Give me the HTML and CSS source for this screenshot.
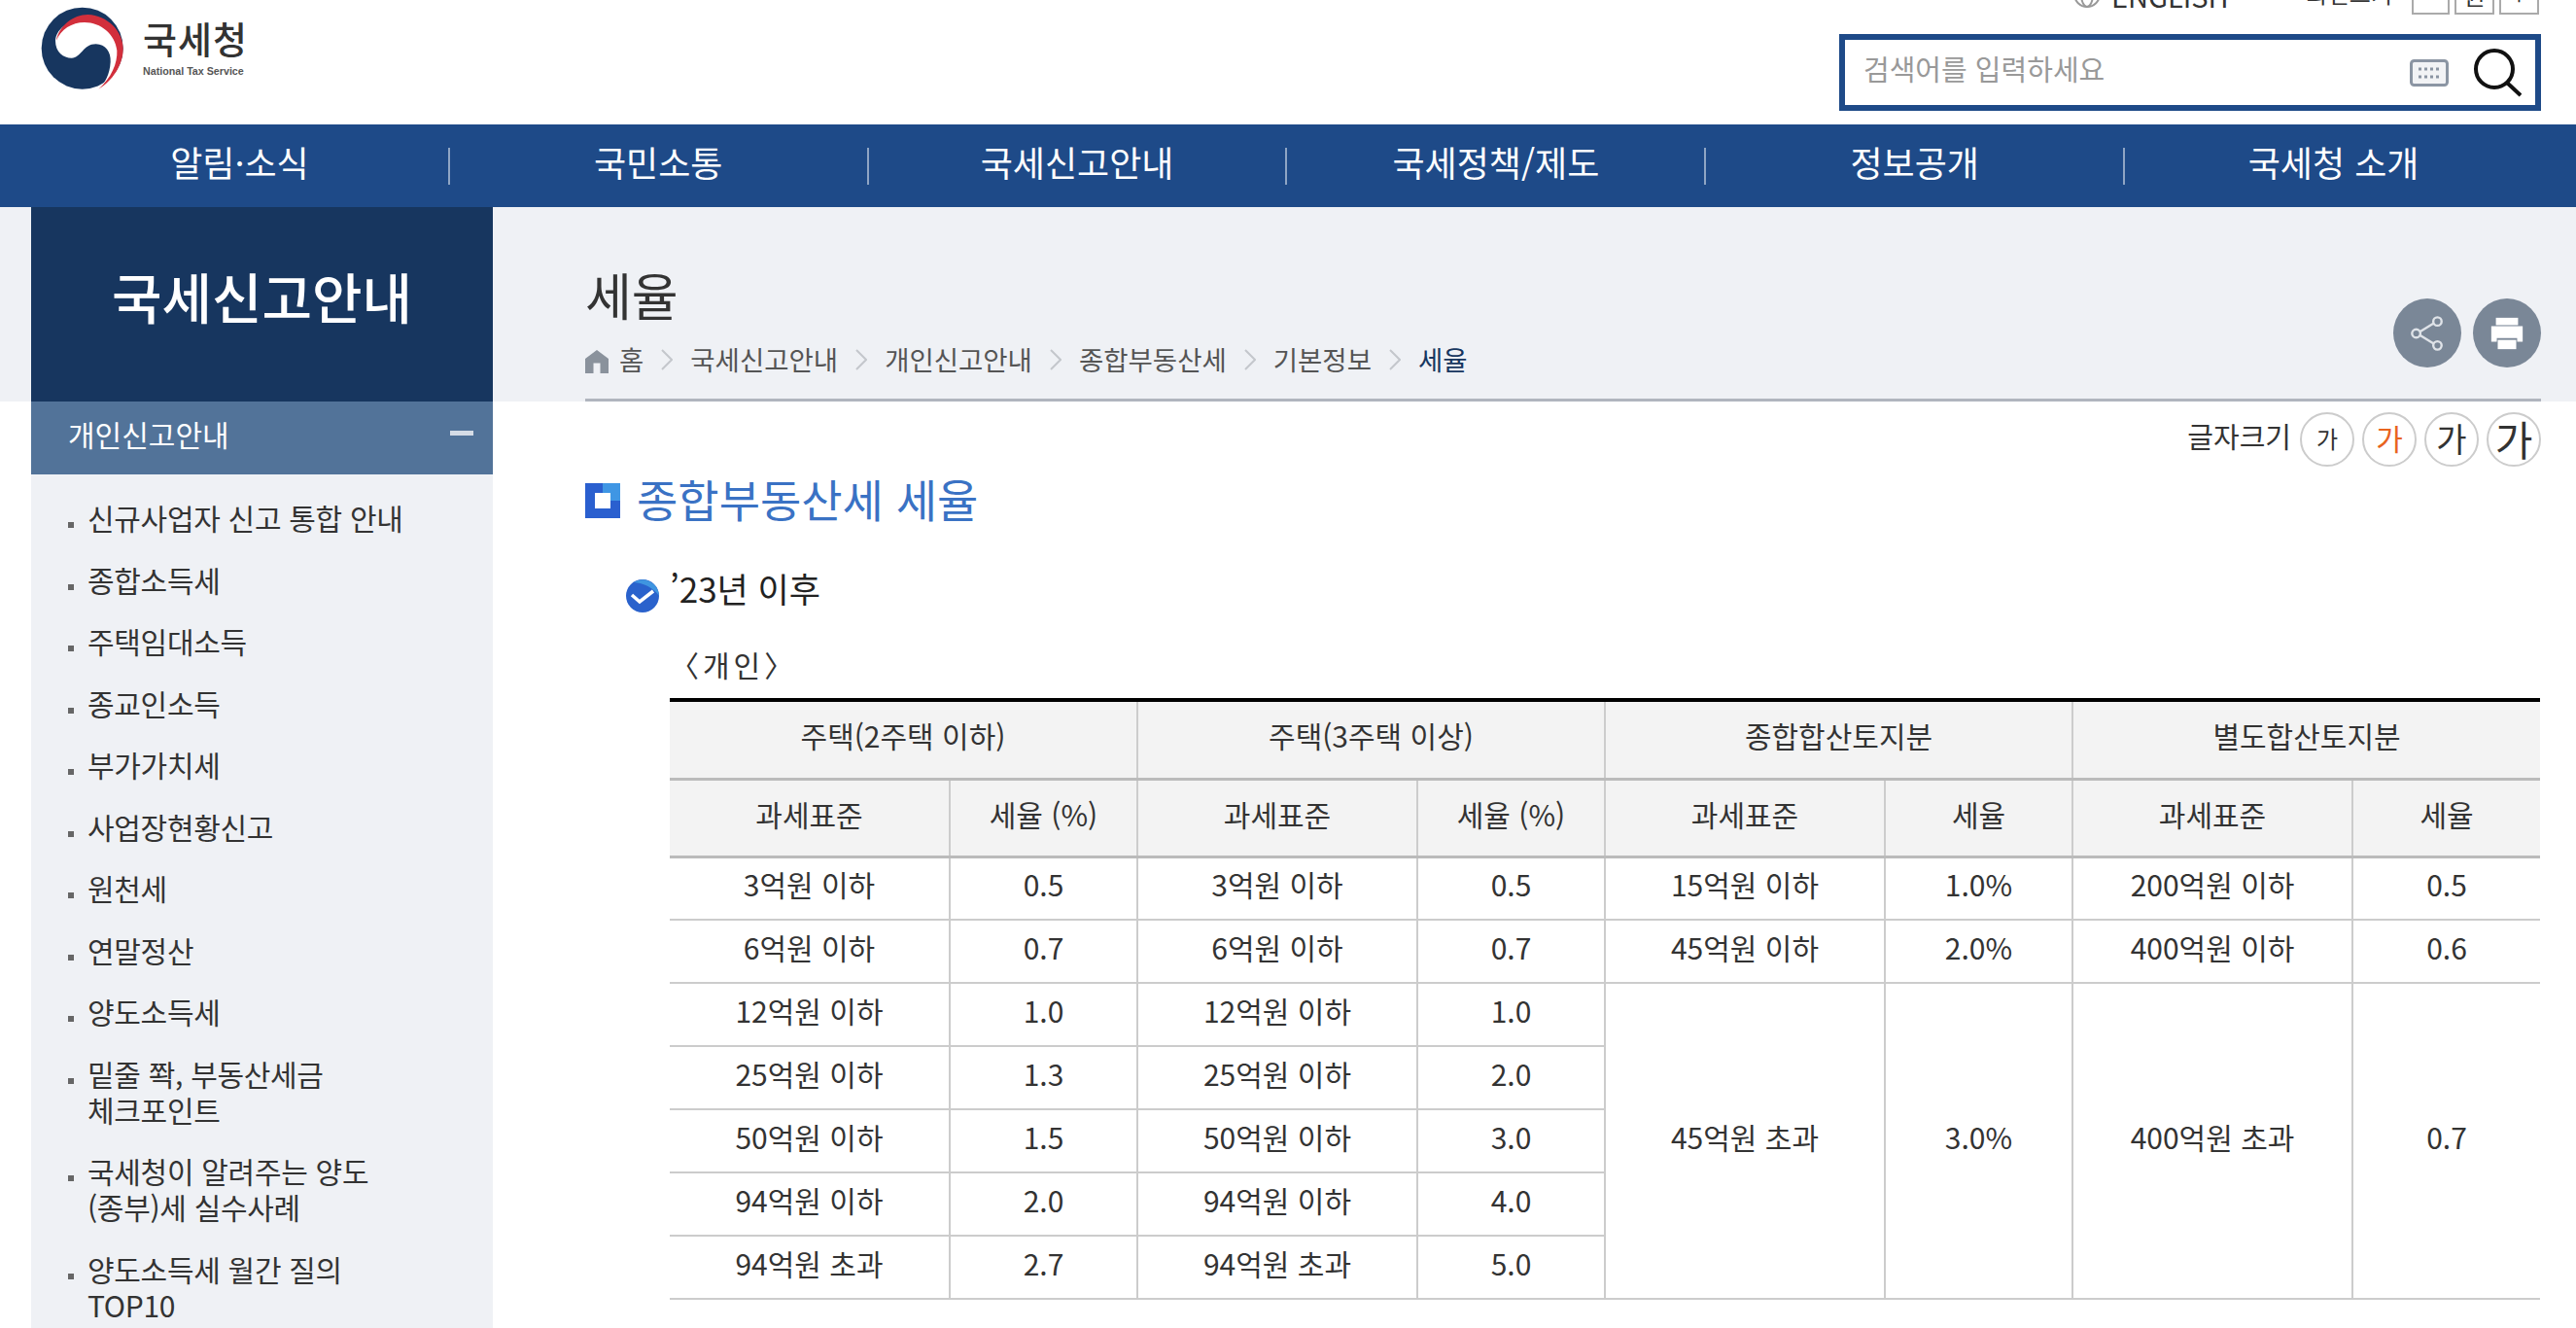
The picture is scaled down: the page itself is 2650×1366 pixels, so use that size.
FILE: index.html
```html
<!DOCTYPE html>
<html lang="ko">
<head>
    <meta charset="UTF-8">
    <meta name="viewport" content="width=device-width, initial-scale=1.0">
    <title>종합부동산세 세율 - 국세청</title>
    <link rel="stylesheet" href="styles.css">
</head>
<body>
    <header class="top">
        <a class="logo">
            <svg class="logo-mark" viewBox="125 20 258 258">
                <circle cx="253" cy="148" r="126" fill="#17365f"/>
                <path fill="#fff" d="M305 272C345 245 376 200 376 150C376 100 320 60 255 62C205 64 172 90 170 125C170 160 195 178 220 178C250 178 255 135 295 135C325 135 342 160 340 190C338 230 322 255 305 272Z"/>
                <path fill="#d22f3c" d="M173 124C180 80 225 44 270 44C330 46 379 95 379 150C379 200 345 250 303 274C342 240 362 195 360 155C355 105 310 68 260 68C220 68 187 90 173 124Z"/>
            </svg>
            <span class="logo-text">
                <span class="logo-ko">국세청</span>
                <span class="logo-en">National Tax Service</span>
            </span>
        </a>
        <div class="top-right">
            <div class="util">
                <svg class="globe" viewBox="0 0 28 28">
                    <circle cx="14" cy="14" r="13" fill="none" stroke="#999" stroke-width="2"/>
                    <ellipse cx="14" cy="14" rx="6" ry="13" fill="none" stroke="#999" stroke-width="2"/>
                </svg>
                <span class="util-lang">ENGLISH</span>
                <span class="util-zoom">화면크기</span>
                <span class="util-btn util-btn-first">−</span>
                <span class="util-btn">원</span>
                <span class="util-btn">+</span>
            </div>
            <div class="search">
                <span class="search-text">검색어를 입력하세요</span>
                <svg class="kbd" viewBox="0 0 40 28">
                    <rect x="1.5" y="1.5" width="37" height="25" rx="3" fill="#f2f3f5" stroke="#8b95a3" stroke-width="3"/>
                    <path stroke="#8b95a3" stroke-width="3" stroke-dasharray="3 3" d="M9 10H32M9 18H32"/>
                </svg>
                <svg class="magnifier" viewBox="0 0 50 50">
                    <circle cx="22" cy="21" r="19" fill="none" stroke="#111" stroke-width="4"/>
                    <path stroke="#111" stroke-width="4" d="M35 35L49 48"/>
                </svg>
            </div>
        </div>
    </header>

    <nav class="gnb">
        <a>알림·소식</a>
        <a>국민소통</a>
        <a>국세신고안내</a>
        <a>국세정책/제도</a>
        <a>정보공개</a>
        <a>국세청 소개</a>
    </nav>

    <div class="wrap">
        <aside class="side">
            <h2 class="side-title">국세신고안내</h2>
            <div class="side-sub">개인신고안내<span class="minus"></span></div>
            <ul class="side-list">
                <li>신규사업자 신고 통합 안내</li>
                <li>종합소득세</li>
                <li>주택임대소득</li>
                <li>종교인소득</li>
                <li>부가가치세</li>
                <li>사업장현황신고</li>
                <li>원천세</li>
                <li>연말정산</li>
                <li>양도소득세</li>
                <li>밑줄 쫙, 부동산세금<br>체크포인트</li>
                <li>국세청이 알려주는 양도<br>(종부)세 실수사례</li>
                <li>양도소득세 월간 질의<br>TOP10</li>
            </ul>
        </aside>

        <main class="main">
            <div class="page-head">
                <div>
                    <h1 class="page-title">세율</h1>
                    <div class="crumbs">
                        <svg class="home" viewBox="0 0 24 24">
                            <path fill="#8a929c" d="M12 0L24 9V24H15.5V13.5H8.5V24H0V9Z"/>
                        </svg>
                        <span>홈</span>
                        <svg class="chev" viewBox="0 0 12 22"><path fill="none" stroke="#c4c7cc" stroke-width="2" d="M1 1L11 11L1 21"/></svg>
                        <span>국세신고안내</span>
                        <svg class="chev" viewBox="0 0 12 22"><path fill="none" stroke="#c4c7cc" stroke-width="2" d="M1 1L11 11L1 21"/></svg>
                        <span>개인신고안내</span>
                        <svg class="chev" viewBox="0 0 12 22"><path fill="none" stroke="#c4c7cc" stroke-width="2" d="M1 1L11 11L1 21"/></svg>
                        <span>종합부동산세</span>
                        <svg class="chev" viewBox="0 0 12 22"><path fill="none" stroke="#c4c7cc" stroke-width="2" d="M1 1L11 11L1 21"/></svg>
                        <span>기본정보</span>
                        <svg class="chev" viewBox="0 0 12 22"><path fill="none" stroke="#c4c7cc" stroke-width="2" d="M1 1L11 11L1 21"/></svg>
                        <span class="crumb-now">세율</span>
                    </div>
                </div>
                <div class="actions">
                    <span class="round-btn">
                        <svg viewBox="0 0 40 40">
                            <path fill="none" stroke="#dfe3e8" stroke-width="2.5" d="M30 7L9 20L30 33"/>
                            <circle cx="31" cy="7" r="4.5" fill="#7a8797" stroke="#dfe3e8" stroke-width="2.5"/>
                            <circle cx="8" cy="20" r="4.5" fill="#7a8797" stroke="#dfe3e8" stroke-width="2.5"/>
                            <circle cx="31" cy="33" r="4.5" fill="#7a8797" stroke="#dfe3e8" stroke-width="2.5"/>
                        </svg>
                    </span>
                    <span class="round-btn">
                        <svg viewBox="0 0 40 40">
                            <path fill="#fff" d="M8 3H32V11H8Z"/>
                            <path fill="#fff" d="M3 12H37V29H31V25H9V29H3Z"/>
                            <path fill="#fff" d="M10 27H30V37H10Z"/>
                        </svg>
                    </span>
                </div>
            </div>

            <div class="font-size">
                <span class="font-label">글자크기</span>
                <span class="fs fs-1">가</span>
                <span class="fs fs-2">가</span>
                <span class="fs fs-3">가</span>
                <span class="fs fs-4">가</span>
            </div>

            <h2 class="sec-title">
                <svg class="sec-icon" viewBox="0 0 36 36">
                    <rect width="36" height="36" fill="#2a5fcf"/>
                    <rect x="18" width="18" height="18" fill="#3f96e4"/>
                    <rect x="10" y="10" width="16" height="16" fill="#fff"/>
                </svg>
                종합부동산세 세율
            </h2>

            <h3 class="sub-title">
                <svg class="check" viewBox="0 0 34 34">
                    <circle cx="17" cy="17" r="17" fill="#2a62cc"/>
                    <path fill="#3f95e0" d="M8 3A17 17 0 0 1 34 17C28 8 18 4 8 3Z"/>
                    <path fill="none" stroke="#fff" stroke-width="3.5" d="M6 16L14 23L28 12"/>
                </svg>
                <span>’23년 이후</span>
            </h3>

            <p class="tbl-caption">〈개인〉</p>

            <table class="rate">
                <colgroup>
                    <col class="col-base"><col class="col-rate">
                    <col class="col-base"><col class="col-rate">
                    <col class="col-base"><col class="col-rate">
                    <col class="col-base"><col class="col-rate">
                </colgroup>
                <thead>
                    <tr class="head-top">
                        <th colspan="2">주택(2주택 이하)</th>
                        <th colspan="2">주택(3주택 이상)</th>
                        <th colspan="2">종합합산토지분</th>
                        <th colspan="2">별도합산토지분</th>
                    </tr>
                    <tr>
                        <th>과세표준</th><th>세율 (%)</th>
                        <th>과세표준</th><th>세율 (%)</th>
                        <th>과세표준</th><th>세율</th>
                        <th>과세표준</th><th>세율</th>
                    </tr>
                </thead>
                <tbody>
                    <tr>
                        <td>3억원 이하</td><td>0.5</td><td>3억원 이하</td><td>0.5</td>
                        <td>15억원 이하</td><td>1.0%</td><td>200억원 이하</td><td>0.5</td>
                    </tr>
                    <tr>
                        <td>6억원 이하</td><td>0.7</td><td>6억원 이하</td><td>0.7</td>
                        <td>45억원 이하</td><td>2.0%</td><td>400억원 이하</td><td>0.6</td>
                    </tr>
                    <tr>
                        <td>12억원 이하</td><td>1.0</td><td>12억원 이하</td><td>1.0</td>
                        <td rowspan="5">45억원 초과</td><td rowspan="5">3.0%</td>
                        <td rowspan="5">400억원 초과</td><td rowspan="5">0.7</td>
                    </tr>
                    <tr><td>25억원 이하</td><td>1.3</td><td>25억원 이하</td><td>2.0</td></tr>
                    <tr><td>50억원 이하</td><td>1.5</td><td>50억원 이하</td><td>3.0</td></tr>
                    <tr><td>94억원 이하</td><td>2.0</td><td>94억원 이하</td><td>4.0</td></tr>
                    <tr><td>94억원 초과</td><td>2.7</td><td>94억원 초과</td><td>5.0</td></tr>
                </tbody>
            </table>
        </main>
    </div>
</body>
</html>
```

FILE: styles.css
```css
* {
    box-sizing: border-box;
}
html, body {
    height: 1366px;
    overflow: hidden;
}
body {
    margin: 0;
    background-color: #fff;
    font-family: "Noto Sans CJK KR", "Noto Sans", sans-serif;
    color: #333;
}
h1, h2, h3, p, ul {
    margin: 0;
    padding: 0;
    font-weight: 400;
}

/* header */
.top {
    height: 128px;
    display: flex;
    justify-content: space-between;
    padding: 0 36px 0 42px;
}
.logo {
    display: flex;
    align-items: flex-start;
    gap: 19px;
    padding-top: 7px;
}
.logo-mark {
    width: 86px;
    height: 86px;
}
.logo-text {
    display: flex;
    flex-direction: column;
    padding-top: 11px;
}
.logo-ko {
    font-size: 38px;
    line-height: 42px;
    font-weight: 500;
    color: #333;
    letter-spacing: 1px;
}
.logo-en {
    margin-top: 6px;
    font-family: "Liberation Sans", sans-serif;
    font-size: 10.7px;
    line-height: 14px;
    font-weight: 700;
    color: #555;
    white-space: nowrap;
}
.top-right {
    display: flex;
    flex-direction: column;
    align-items: flex-end;
}
.util {
    display: flex;
    align-items: flex-end;
    height: 40px;
    margin-top: -25px;
    padding-right: 2px;
    color: #333;
}
.globe {
    width: 28px;
    height: 28px;
    margin-bottom: 7px;
}
.util-lang {
    margin-left: 11px;
    margin-bottom: 6px;
    font-size: 29px;
    line-height: 28px;
}
.util-zoom {
    margin-left: 80px;
    margin-bottom: 8px;
    font-size: 24px;
    line-height: 28px;
}
.util-btn {
    width: 41px;
    height: 40px;
    margin-left: 5px;
    border: 2px solid #aaa;
    text-align: center;
    font-size: 24px;
    line-height: 36px;
}
.util-btn-first {
    width: 39px;
    margin-left: 20px;
}
.search {
    width: 722px;
    height: 79px;
    margin-top: 20px;
    border: 6px solid #1e4a88;
    display: flex;
    align-items: center;
    padding: 0 14px 0 19px;
}
.search-text {
    flex: 1;
    padding-bottom: 9px;
    font-size: 29px;
    color: #999;
}
.kbd {
    width: 40px;
    height: 28px;
    margin-right: 25px;
}
.magnifier {
    width: 50px;
    height: 50px;
}

/* main menu */
.gnb {
    height: 85px;
    display: flex;
    padding: 24px 35px 0 32px;
    background-color: #1e4a88;
}
.gnb a {
    flex: 1;
    height: 38px;
    border-right: 2px solid rgba(255,255,255,0.5);
    text-align: center;
    color: #fff;
    font-size: 36px;
    line-height: 28px;
}
.gnb a:last-child {
    border-right: none;
}

/* page */
.wrap {
    display: flex;
    height: 1153px;
    background: linear-gradient(#eff1f5 200px, #fff 200px);
}
.side {
    width: 475px;
    margin-left: 32px;
    background-color: #eff1f5;
}
.side-title {
    height: 200px;
    padding-bottom: 20px;
    display: flex;
    align-items: center;
    justify-content: center;
    background-color: #17365f;
    color: #fff;
    font-size: 56px;
    font-weight: 500;
}
.side-sub {
    height: 75px;
    padding: 0 20px 10px 38px;
    display: flex;
    align-items: center;
    justify-content: space-between;
    background-color: #527399;
    color: #fff;
    font-size: 30px;
}
.minus {
    width: 24px;
    height: 5px;
    background-color: #d5dce6;
}
.side-list {
    list-style: none;
    padding: 13px 20px 0 38px;
}
.side-list li {
    position: relative;
    padding: 13px 0 13.5px 20px;
    font-size: 30px;
    line-height: 37px;
    letter-spacing: -0.3px;
    color: #333;
}
.side-list li::before {
    content: "";
    position: absolute;
    left: 0;
    top: 36px;
    width: 6px;
    height: 6px;
    background-color: #666;
}

.main {
    width: 2012px;
    margin-left: 95px;
}
.page-head {
    height: 200px;
    border-bottom: 3px solid #b0b5be;
    display: flex;
    justify-content: space-between;
    align-items: flex-start;
}
.page-title {
    margin-top: 60px;
    font-size: 52px;
    line-height: 60px;
    color: #333;
}
.crumbs {
    display: flex;
    align-items: center;
    gap: 18px;
    margin-top: 16px;
    font-size: 27.5px;
    line-height: 40px;
    color: #555;
}
.home {
    width: 24px;
    height: 24px;
    margin-right: -7px;
    margin-top: 6px;
}
.chev {
    width: 12px;
    height: 22px;
    margin-top: 2px;
}
.crumb-now {
    color: #17365f;
}
.actions {
    display: flex;
    gap: 12px;
    margin-top: 94px;
}
.round-btn {
    width: 70px;
    height: 71px;
    border-radius: 50%;
    background-color: #7a8797;
    display: flex;
    align-items: center;
    justify-content: center;
}
.round-btn svg {
    width: 38px;
    height: 38px;
}

.font-size {
    display: flex;
    justify-content: flex-end;
    align-items: center;
    gap: 8px;
    margin-top: 11px;
}
.font-label {
    margin-right: 1px;
    padding-bottom: 8px;
    font-size: 29px;
    color: #333;
}
.fs {
    width: 56px;
    height: 56px;
    padding-bottom: 4px;
    border: 2px solid #ccc;
    border-radius: 50%;
    display: flex;
    align-items: center;
    justify-content: center;
    color: #333;
}
.fs-1 { font-size: 24px; }
.fs-2 { font-size: 30px; color: #e8641f; }
.fs-3 { font-size: 34px; }
.fs-4 { font-size: 42px; }

.sec-title {
    display: flex;
    align-items: center;
    gap: 17px;
    margin-top: 2px;
    font-size: 46px;
    line-height: 60px;
    color: #3a72c4;
}
.sec-icon {
    width: 36px;
    height: 36px;
    margin-top: 6px;
}
.sub-title {
    display: flex;
    align-items: flex-start;
    gap: 11px;
    margin: 38px 0 0 42px;
    font-size: 35px;
    line-height: 50px;
    color: #222;
}
.check {
    width: 34px;
    height: 34px;
    margin-top: 16px;
}
.tbl-caption {
    margin: 33px 0 0 87px;
    font-size: 30px;
    line-height: 40px;
    letter-spacing: 4px;
    color: #333;
}

/* rate table */
.rate {
    width: 1923px;
    margin: 15px 0 0 87px;
    table-layout: fixed;
    border-collapse: collapse;
    border-top: 4px solid #000;
}
.col-base { width: 288px; }
.col-rate { width: 193px; }
.rate th, .rate td {
    border: 2px solid #ccc;
    padding: 0 0 9px;
    text-align: center;
    font-size: 30px;
    font-weight: 400;
    color: #333;
}
.rate th {
    height: 80px;
    background-color: #f3f3f3;
    border-bottom: 3px solid #bbb;
}
.rate .head-top th {
    height: 81px;
}
.rate td {
    height: 65px;
}
.rate tr > :first-child {
    border-left: none;
}
.rate tr > :last-child {
    border-right: none;
}
```
